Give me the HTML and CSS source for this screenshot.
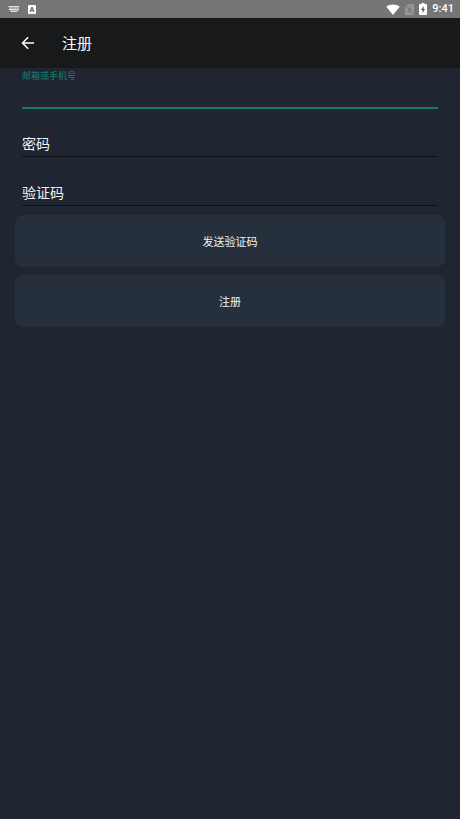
FILE: index.html
```html
<!DOCTYPE html>
<html lang="zh-CN">
<head>
<meta charset="utf-8">
<meta name="viewport" content="width=device-width, initial-scale=1">
<title>注册</title>
<link rel="stylesheet" href="styles.css">
</head>
<body>
<div class="status-bar">
  <div class="status-group">
    <svg class="icon-keyboard" viewBox="0 0 12 8" aria-hidden="true">
      <path d="M1 1h10v3.500L9.500 7h-7L1 4.500z" fill="#a8a8a8"/>
      <path d="M.5 1.500h11M1 4.500h10M3 6.500h6" stroke="#f0f0f0" fill="none" stroke-dasharray="2 .6"/>
    </svg>
    <svg class="icon-input" viewBox="0 0 8 9" aria-hidden="true">
      <rect width="8" height="9" rx="1" fill="#fff"/>
      <path d="M2 7 4 2l2 5M2.700 5.400h2.600" stroke="#555" fill="none"/>
    </svg>
  </div>
  <div class="status-group status-right">
    <svg class="icon-wifi" viewBox="0 0 14 11" aria-hidden="true">
      <path d="M7 11 .3 2.700C2 1.200 4.300.4 7 .4s5 .8 6.700 2.300z" fill="#fff"/>
    </svg>
    <svg class="icon-sim" viewBox="0 0 9 11" aria-hidden="true">
      <path d="M3 .5h5.500v10h-8V3z" fill="#929292" stroke="#9a9a9a"/>
      <path d="m1 2 7 8M3 8l3-4" stroke="#727272" fill="none"/>
    </svg>
    <svg class="icon-battery" viewBox="0 0 8 12" aria-hidden="true">
      <path d="M2.500 0h3v1H7q1 0 1 1v9q0 1-1 1H1q-1 0-1-1V2q0-1 1-1h1.500z" fill="#fff"/>
      <path d="M4.600 3 2 7h1.600v3L6 6H4.600z" fill="#555"/>
    </svg>
    <span class="clock">9:41</span>
  </div>
</div>
<header class="app-bar">
  <button class="back" type="button" aria-label="返回">
    <svg viewBox="0 0 14 14" aria-hidden="true">
      <path d="M13 7H2M7.200 1.300 1.500 7l5.700 5.700" fill="none" stroke="#fff" stroke-width="1.500"/>
    </svg>
  </button>
  <h1>注册</h1>
</header>
<main>
  <form>
    <div class="field field-active">
      <label for="account">邮箱或手机号</label>
      <input id="account" type="text">
    </div>
    <div class="field">
      <label for="password">密码</label>
      <input id="password" type="password">
    </div>
    <div class="field">
      <label for="code">验证码</label>
      <input id="code" type="text">
    </div>
    <div class="actions">
      <button class="action" type="button">发送验证码</button>
      <button class="action" type="submit">注册</button>
    </div>
  </form>
</main>
</body>
</html>
```

FILE: styles.css
```css
* {
  box-sizing: border-box;
}

body {
  margin: 0;
  min-height: 100vh;
  background: #1f2631;
  color: #f2f4f6;
  font-family: Roboto, "Noto Sans CJK SC", sans-serif;
}

svg {
  display: block;
}

.status-bar {
  display: flex;
  align-items: center;
  justify-content: space-between;
  height: 18px;
  padding: 0 6px 0 8px;
  background: #757575;
  color: #fff;
}

.status-group {
  display: flex;
  align-items: center;
  gap: 8px;
}

.status-right {
  gap: 5px;
}

.icon-keyboard {
  width: 12px;
  height: 8px;
}

.icon-input {
  width: 8px;
  height: 9px;
}

.icon-wifi {
  width: 14px;
  height: 11px;
}

.icon-sim {
  width: 9px;
  height: 11px;
}

.icon-battery {
  width: 8px;
  height: 12px;
}

.clock {
  font-size: 11px;
  font-weight: 500;
  line-height: 20px;
}

.app-bar {
  display: flex;
  align-items: center;
  gap: 20px;
  height: 50px;
  padding: 0 14px;
  background: #18191b;
}

.back {
  display: grid;
  place-items: center;
  width: 28px;
  height: 28px;
  padding: 0;
  border: 0;
  background: none;
}

.back svg {
  width: 14px;
  height: 14px;
}

h1 {
  margin: 0;
  padding-top: 2px;
  color: #fff;
  font-size: 15px;
  font-weight: 400;
  line-height: 24px;
}

form {
  display: flex;
  flex-direction: column;
  gap: 23px;
}

.field {
  display: grid;
  margin: 0 22px;
}

.field label,
.field input {
  grid-area: 1 / 1;
}

.field label {
  z-index: 1;
  font-size: 14px;
  line-height: 26px;
  pointer-events: none;
}

.field input {
  width: 100%;
  height: 26px;
  padding: 0;
  border: 0;
  border-bottom: 1px solid #0c1018;
  border-radius: 0;
  outline: 0;
  background: none;
  color: inherit;
  font: inherit;
  font-size: 14px;
}

.field-active label {
  grid-area: 1 / 1;
  color: #13806f;
  font-size: 9px;
  line-height: 17px;
}

.field-active input {
  grid-area: 2 / 1;
  height: 23px;
  border-color: #19796c;
  box-shadow: 0 1px #19796c;
}

.actions {
  display: flex;
  flex-direction: column;
  gap: 8px;
  margin: -14px 15px 0;
}

.action {
  height: 52px;
  border: 0;
  border-radius: 8px;
  background: #26303c;
  color: #f2f4f6;
  font: inherit;
  font-size: 11px;
}
```
